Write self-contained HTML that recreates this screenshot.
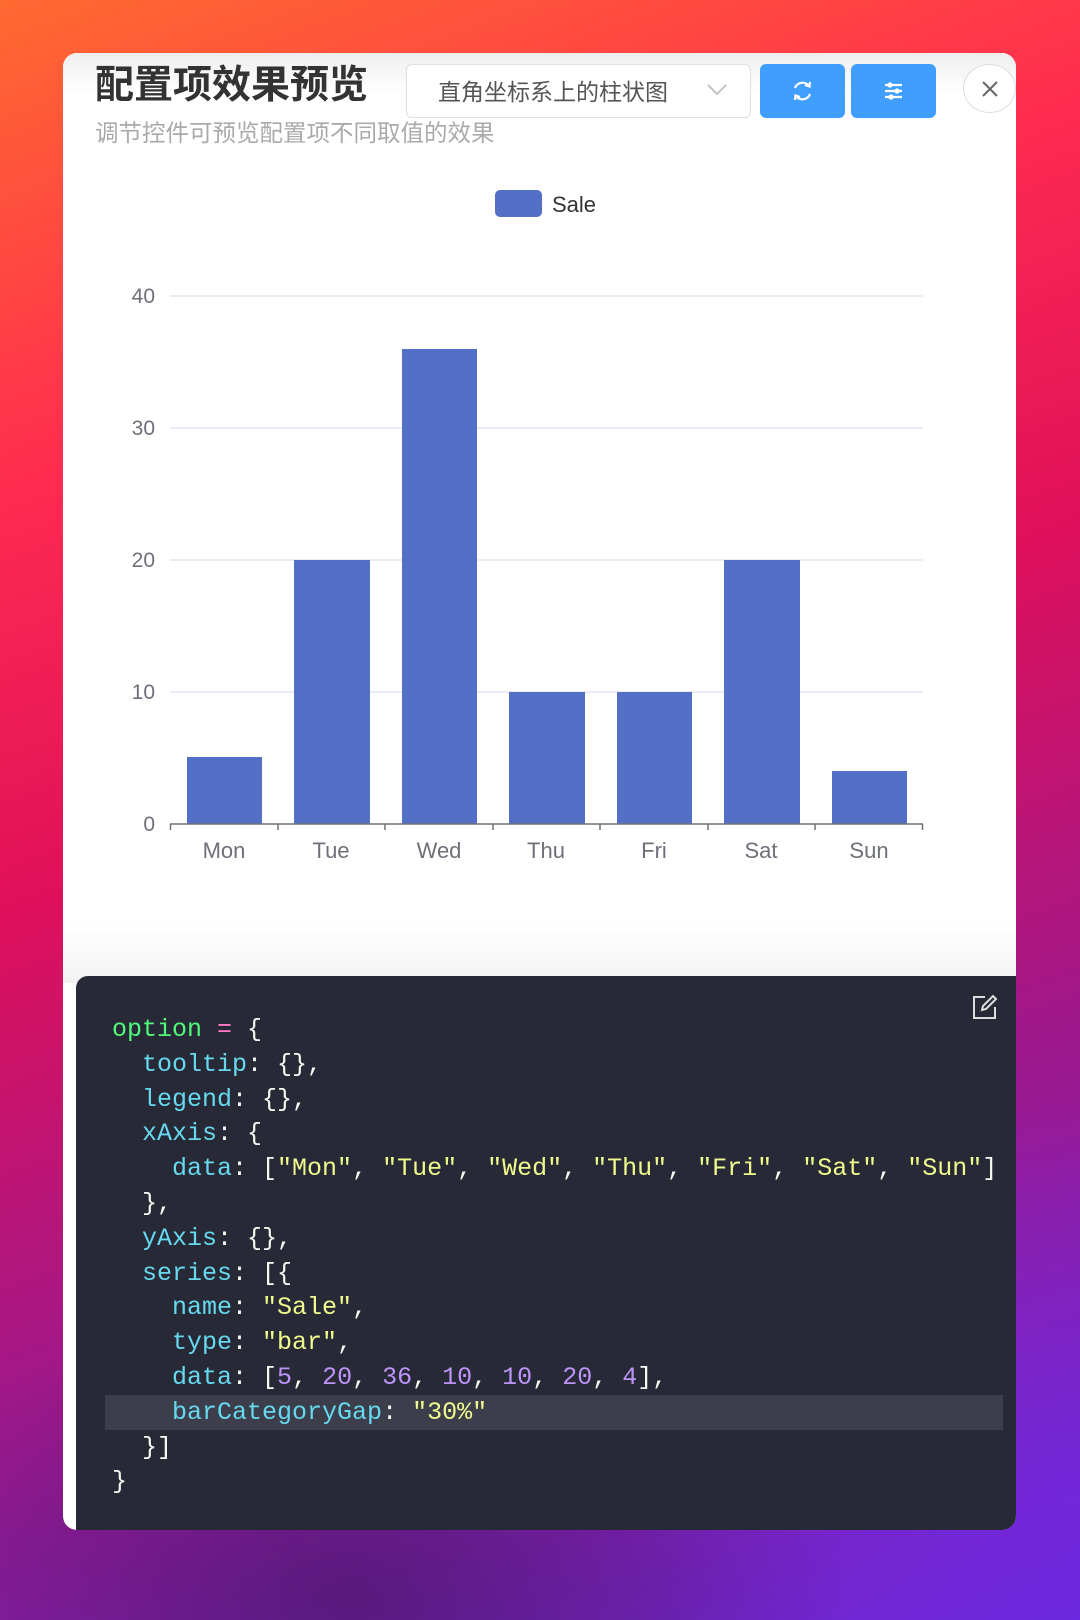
<!DOCTYPE html>
<html><head><meta charset="utf-8"><style>
*{margin:0;padding:0;box-sizing:border-box}
body{width:1080px;height:1620px;overflow:hidden;position:relative;font-family:"Liberation Sans","Noto Sans CJK SC",sans-serif;
background:linear-gradient(160deg,#ff6a30 0%,#ff2a50 25%,#e0105a 45%,#a0188a 70%,#6a28d8 100%);}
.bg2{position:absolute;inset:0;background:radial-gradient(ellipse 500px 300px at 350px 1600px,rgba(60,20,90,.6),transparent),radial-gradient(ellipse 500px 400px at 1080px 1500px,rgba(110,40,230,.6),transparent)}
.panel{position:absolute;left:63px;top:53px;width:953px;height:1477px;background:#fff;border-radius:14px;overflow:hidden}
.top{position:absolute;left:0;top:0;width:100%;height:130px;background:linear-gradient(#eeeeee,#fff 40px)}
.title{position:absolute;left:32px;font-size:39px;font-weight:bold;color:#333;line-height:46px}
.sub{position:absolute;left:32px;font-size:23.5px;color:#aaa;line-height:30px}
.sel{position:absolute;left:343px;top:11px;width:345px;height:54px;border:1px solid #dcdfe6;border-radius:6px;background:#fff;font-size:23px;color:#555;line-height:54px;padding-left:31px}
.sel svg{position:absolute;right:22px;top:18px}
.btn{position:absolute;top:11px;width:85px;height:54px;background:#409eff;border-radius:6px}
.close{position:absolute;left:900px;top:11px;width:53px;height:49px;border:1px solid #ddd;border-radius:50%;background:#fff}
.code{position:absolute;left:13px;top:923px;width:940px;height:560px;background:#272a36;border-radius:12px 0 0 0}
pre{position:absolute;left:36px;top:37px;font-family:"Liberation Mono",monospace;font-size:25px;line-height:34.8px;color:#f8f8f2}
.hl{position:absolute;left:29px;top:419px;width:898px;height:35px;background:#3c3f4b}
.g{color:#50fa7b}.p{color:#ff79c6}.k{color:#66d9ef}.s{color:#f1fa8c}.n{color:#bd93f9}
</style></head><body><div class="bg2"></div>
<div class="panel">
<div class="top"></div>
<div class="title" style="top:10px">配置项效果预览</div>
<div class="sub" style="top:65px">调节控件可预览配置项不同取值的效果</div>
<div class="sel">直角坐标系上的柱状图<svg width="22" height="14" viewBox="0 0 22 14"><path d="M2 2 L11 11 L20 2" fill="none" stroke="#bbb" stroke-width="1.6"/></svg></div>
<div class="btn" style="left:697px"><svg width="85" height="54" viewBox="0 0 85 54"><g fill="none" stroke="#fff" stroke-width="2.2"><path d="M35 24 A8 8 0 0 1 49 22"/><path d="M50 30 A8 8 0 0 1 36 32"/><path d="M45 21 L49.5 22.5 L50 18"/><path d="M40 33 L35.5 31.5 L35 36"/></g></svg></div>
<div class="btn" style="left:788px"><svg width="85" height="54" viewBox="0 0 85 54"><g stroke="#fff" stroke-width="2.2"><line x1="34" y1="21" x2="51" y2="21"/><line x1="34" y1="27" x2="51" y2="27"/><line x1="34" y1="33" x2="51" y2="33"/></g><g fill="#fff"><circle cx="39" cy="21" r="2.6"/><circle cx="46" cy="27" r="2.6"/><circle cx="40" cy="33" r="2.6"/></g></svg></div>
<div class="close"><svg width="53" height="49" viewBox="0 0 53 49"><path d="M19 17 L33 31 M33 17 L19 31" stroke="#666" stroke-width="2"/></svg></div>
<svg style="position:absolute;left:0;top:120px" width="953" height="800" viewBox="0 120 953 800" font-family="Liberation Sans, sans-serif">
<rect x="432" y="137" width="47" height="27" rx="5" fill="#5470c6"/>
<text x="489" y="211" font-size="22" fill="#333" transform="translate(0,-52)">Sale</text>
<g stroke="#e0e6f1" stroke-width="1.5"><line x1="107" y1="243" x2="860" y2="243"/><line x1="107" y1="375" x2="860" y2="375"/><line x1="107" y1="507" x2="860" y2="507"/><line x1="107" y1="639" x2="860" y2="639"/></g>
<g font-size="21" fill="#6e7079" text-anchor="end"><text x="92" y="250">40</text><text x="92" y="382">30</text><text x="92" y="514">20</text><text x="92" y="646">10</text><text x="92" y="778">0</text></g>
<g fill="#5470c6">
<rect x="124" y="704" width="75" height="67"/>
<rect x="231" y="507" width="76" height="264"/>
<rect x="339" y="296" width="75" height="475"/>
<rect x="446" y="639" width="76" height="132"/>
<rect x="554" y="639" width="75" height="132"/>
<rect x="661" y="507" width="76" height="264"/>
<rect x="769" y="718" width="75" height="53"/>
</g>
<g stroke="#6e7079" stroke-width="1.5"><line x1="107" y1="771" x2="860" y2="771"/>
<line x1="107.5" y1="771" x2="107.5" y2="777"/><line x1="215" y1="771" x2="215" y2="777"/><line x1="322" y1="771" x2="322" y2="777"/><line x1="430" y1="771" x2="430" y2="777"/><line x1="537" y1="771" x2="537" y2="777"/><line x1="645" y1="771" x2="645" y2="777"/><line x1="752" y1="771" x2="752" y2="777"/><line x1="859.5" y1="771" x2="859.5" y2="777"/></g>
<g font-size="22" fill="#6e7079" text-anchor="middle"><text x="161" y="805">Mon</text><text x="268" y="805">Tue</text><text x="376" y="805">Wed</text><text x="483" y="805">Thu</text><text x="591" y="805">Fri</text><text x="698" y="805">Sat</text><text x="806" y="805">Sun</text></g>
</svg>
<div style="position:absolute;left:0;top:870px;width:100%;height:60px;background:linear-gradient(#fff,#f2f2f2)"></div>
<div class="code">
<svg style="position:absolute;left:896px;top:18px" width="26" height="26" viewBox="0 0 26 26"><path d="M13 3 H2 V24 H23 V13" fill="none" stroke="#ddd" stroke-width="2"/><path d="M10 16 L11 12 L21 2 L24 5 L14 15 Z" fill="none" stroke="#ddd" stroke-width="2"/></svg>
<div class="hl"></div>
<pre><span class="g">option</span> <span class="p">=</span> {
  <span class="k">tooltip</span>: {},
  <span class="k">legend</span>: {},
  <span class="k">xAxis</span>: {
    <span class="k">data</span>: [<span class="s">"Mon"</span>, <span class="s">"Tue"</span>, <span class="s">"Wed"</span>, <span class="s">"Thu"</span>, <span class="s">"Fri"</span>, <span class="s">"Sat"</span>, <span class="s">"Sun"</span>]
  },
  <span class="k">yAxis</span>: {},
  <span class="k">series</span>: [{
    <span class="k">name</span>: <span class="s">"Sale"</span>,
    <span class="k">type</span>: <span class="s">"bar"</span>,
    <span class="k">data</span>: [<span class="n">5</span>, <span class="n">20</span>, <span class="n">36</span>, <span class="n">10</span>, <span class="n">10</span>, <span class="n">20</span>, <span class="n">4</span>],
    <span class="k">barCategoryGap</span>: <span class="s">"30%"</span>
  }]
}</pre>
</div>
</div>
</body></html>
